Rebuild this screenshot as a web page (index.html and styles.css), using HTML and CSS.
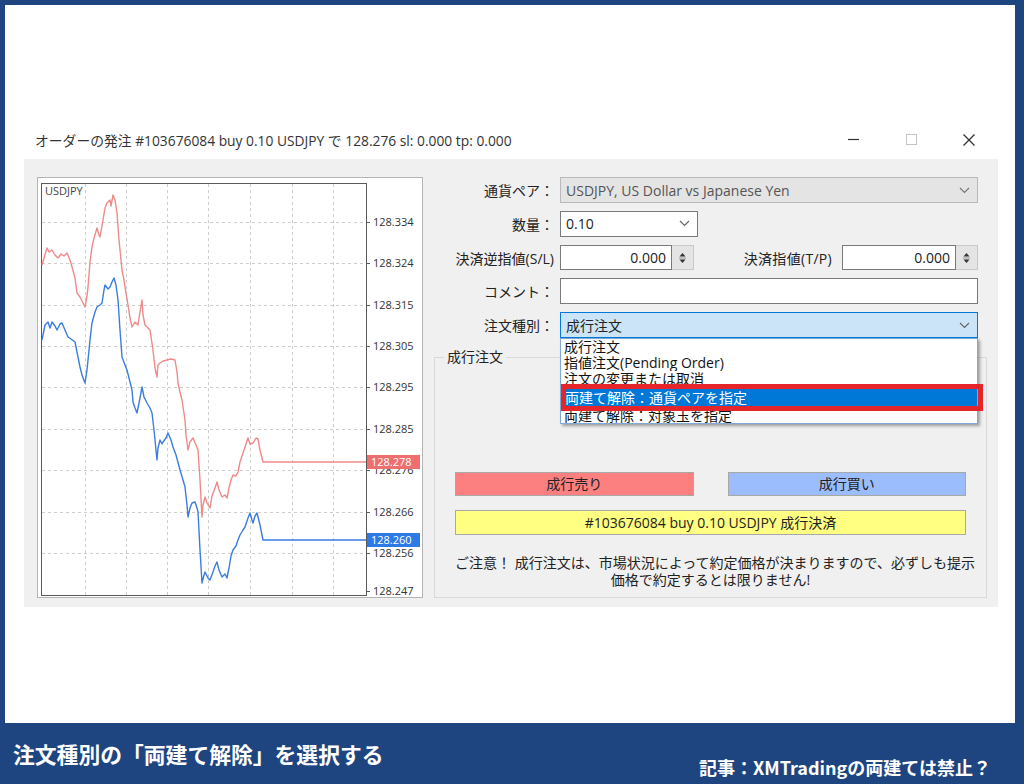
FILE: index.html
```html
<!DOCTYPE html>
<html lang="ja">
<head>
<meta charset="utf-8">
<title>オーダーの発注</title>
<link rel="stylesheet" href="styles.css">
</head>
<body>
<div class="frame">
  <div class="canvas">
    <div class="dialog">
      <div class="titlebar">
        <span class="title">オーダーの発注 #103676084 buy 0.10 USDJPY で 128.276 sl: 0.000 tp: 0.000</span>
        <div class="controls">
          <div class="ctl"><svg width="11" height="11" viewBox="0 0 11 11"><path d="M0 5.5 H11" stroke="#333" stroke-width="1.2"/></svg></div>
          <div class="ctl"><svg width="11" height="11" viewBox="0 0 11 11"><rect x="0.5" y="0.5" width="10" height="10" fill="none" stroke="#c4c4c4" stroke-width="1"/></svg></div>
          <div class="ctl"><svg width="12" height="12" viewBox="0 0 12 12"><path d="M0.5 0.5 L11.5 11.5 M11.5 0.5 L0.5 11.5" stroke="#333" stroke-width="1.3"/></svg></div>
        </div>
      </div>
      <div class="body">
        <div class="chart">
          <svg width="386" height="421" viewBox="37 177 386 421">
            <rect x="37.5" y="177.5" width="385" height="420" fill="#fff" stroke="#b4b4b4"/>
            <g stroke="#cdcdcd" stroke-width="1" stroke-dasharray="3 3">
              <line x1="42" y1="222.5" x2="366" y2="222.5"/>
              <line x1="42" y1="263.5" x2="366" y2="263.5"/>
              <line x1="42" y1="305.5" x2="366" y2="305.5"/>
              <line x1="42" y1="346.5" x2="366" y2="346.5"/>
              <line x1="42" y1="387.5" x2="366" y2="387.5"/>
              <line x1="42" y1="429.5" x2="366" y2="429.5"/>
              <line x1="42" y1="470.5" x2="366" y2="470.5"/>
              <line x1="42" y1="512.5" x2="366" y2="512.5"/>
              <line x1="42" y1="553.5" x2="366" y2="553.5"/>
              <line x1="85.5" y1="184" x2="85.5" y2="595"/>
              <line x1="126.5" y1="184" x2="126.5" y2="595"/>
              <line x1="167.5" y1="184" x2="167.5" y2="595"/>
              <line x1="208.5" y1="184" x2="208.5" y2="595"/>
              <line x1="250.5" y1="184" x2="250.5" y2="595"/>
              <line x1="292.5" y1="184" x2="292.5" y2="595"/>
              <line x1="333.5" y1="184" x2="333.5" y2="595"/>
            </g>
            <rect x="41.5" y="183.5" width="325" height="412" fill="none" stroke="#5a5a5a"/>
            <g stroke="#5a5a5a" stroke-width="1">
              <line x1="367" y1="222.5" x2="370" y2="222.5"/>
              <line x1="367" y1="263.5" x2="370" y2="263.5"/>
              <line x1="367" y1="305.5" x2="370" y2="305.5"/>
              <line x1="367" y1="346.5" x2="370" y2="346.5"/>
              <line x1="367" y1="387.5" x2="370" y2="387.5"/>
              <line x1="367" y1="429.5" x2="370" y2="429.5"/>
              <line x1="367" y1="470.5" x2="370" y2="470.5"/>
              <line x1="367" y1="512.5" x2="370" y2="512.5"/>
              <line x1="367" y1="553.5" x2="370" y2="553.5"/>
              <line x1="367" y1="591.5" x2="370" y2="591.5"/>
            </g>
            <g class="axis">
              <text x="373" y="226">128.334</text>
              <text x="373" y="267">128.324</text>
              <text x="373" y="309">128.315</text>
              <text x="373" y="350">128.305</text>
              <text x="373" y="391">128.295</text>
              <text x="373" y="433">128.285</text>
              <text x="373" y="474">128.276</text>
              <text x="373" y="516">128.266</text>
              <text x="373" y="557">128.256</text>
              <text x="373" y="595">128.247</text>
            </g>
            <text class="sym" x="45" y="195">USDJPY</text>
            <polyline fill="none" stroke="#ef8a8a" stroke-width="1.4" stroke-linejoin="round" points="42,265 44,258 47,248 49,252 52,250 55,255 58,258 61,254 64,256 67,253 70,260 72,267 75,278 77,293 80,297 83,303 85,307 87,296 88,287 90,262 92,247 94,238 97,228 99,235 100,237 103,220 105,208 107,203 110,200 111,206 113,195 115,200 117,213 119,240 122,270 124,280 125,287 128,305 130,318 132,327 135,322 138,325 140,312 142,300 143,315 145,325 148,328 150,330 153,350 155,368 157,377 158,365 160,363 163,361 167,360 171,359 175,360 177,372 178,383 180,392 182,400 185,420 186,435 188,450 190,442 193,438 196,445 198,450 200,480 202,517 203,505 205,497 207,503 210,508 212,496 215,488 217,482 219,490 222,497 225,495 227,498 229,488 231,480 233,475 236,476 238,472 240,462 243,453 245,447 248,438 250,444 253,443 256,438 258,439 260,450 263,462 366,462"/>
            <polyline fill="none" stroke="#3b7ce0" stroke-width="1.4" stroke-linejoin="round" points="42,340 44,330 45,325 48,322 50,328 52,322 55,326 57,330 60,324 62,323 65,330 68,337 71,339 75,342 77,352 80,367 82,375 85,383 87,370 88,360 90,340 92,323 95,312 97,307 100,305 102,303 104,290 105,285 108,289 110,287 112,282 114,278 116,285 118,300 120,330 122,357 125,365 127,370 130,382 132,390 133,402 135,408 137,413 140,398 142,387 144,397 147,403 150,408 152,413 154,430 157,460 158,448 160,440 162,444 163,442 166,438 168,433 171,440 173,447 176,455 180,470 183,480 185,487 187,505 188,517 190,508 192,503 195,502 197,508 198,512 200,550 202,583 204,575 205,572 208,578 210,580 213,572 215,566 217,562 219,570 222,577 225,574 227,578 229,568 231,556 233,550 236,546 238,540 240,535 243,530 245,527 248,518 250,513 252,520 253,523 255,516 257,513 260,525 263,540 366,540"/>
            <rect x="367" y="455" width="53" height="14" fill="#ef6f6f"/>
            <text class="badge" x="371" y="466">128.278</text>
            <rect x="367" y="533" width="53" height="14" fill="#2d7ae6"/>
            <text class="badge" x="371" y="544">128.260</text>
          </svg>
        </div>
        <div class="panel">
          <div class="form">
            <div class="row">
              <span class="lbl">通貨ペア：</span>
              <div class="combo disabled"><span>USDJPY, US Dollar vs Japanese Yen</span><svg width="11" height="7" viewBox="0 0 11 7"><path d="M1 1 L5.5 5.5 L10 1" fill="none" stroke="#777" stroke-width="1.2"/></svg></div>
            </div>
            <div class="row">
              <span class="lbl">数量：</span>
              <div class="combo select"><span>0.10</span><svg width="11" height="7" viewBox="0 0 11 7"><path d="M1 1 L5.5 5.5 L10 1" fill="none" stroke="#666" stroke-width="1.2"/></svg></div>
            </div>
            <div class="row">
              <span class="lbl">決済逆指値(S/L)</span>
              <div class="pair">
                <div class="spinbox sl"><div class="num">0.000</div><div class="spin"><svg width="9" height="16" viewBox="0 0 9 16"><path d="M4.5 3 L7.5 6.5 H1.5 Z M1.5 9.5 H7.5 L4.5 13 Z" fill="#333"/><path d="M1 8 H8" stroke="#999" stroke-width="1"/></svg></div></div>
                <span class="lbl2">決済指値(T/P)</span>
                <div class="spinbox tp"><div class="num">0.000</div><div class="spin"><svg width="9" height="16" viewBox="0 0 9 16"><path d="M4.5 3 L7.5 6.5 H1.5 Z M1.5 9.5 H7.5 L4.5 13 Z" fill="#333"/><path d="M1 8 H8" stroke="#999" stroke-width="1"/></svg></div></div>
              </div>
            </div>
            <div class="row">
              <span class="lbl">コメント：</span>
              <div class="text"></div>
            </div>
            <div class="row">
              <span class="lbl">注文種別：</span>
              <div class="combo focus"><span>成行注文</span><svg width="11" height="7" viewBox="0 0 11 7"><path d="M1 1 L5.5 5.5 L10 1" fill="none" stroke="#666" stroke-width="1.2"/></svg></div>
            </div>
          </div>
          <div class="group">
            <span class="group-label">成行注文</span>
            <div class="btn-row">
              <div class="btn sell">成行売り</div>
              <div class="btn buy">成行買い</div>
            </div>
            <div class="btn close">#103676084 buy 0.10 USDJPY 成行決済</div>
            <p class="note">ご注意！ 成行注文は、市場状況によって約定価格が決まりますので、必ずしも提示<br>価格で約定するとは限りません!</p>
          </div>
          <div class="dropdown">
            <div class="item i1">成行注文</div>
            <div class="item i2">指値注文(Pending Order)</div>
            <div class="item i3">注文の変更または取消</div>
            <div class="item sel">両建て解除：通貨ペアを指定</div>
            <div class="item i5">両建て解除：対象玉を指定</div>
          </div>
          <div class="mark"></div>
        </div>
      </div>
    </div>
  </div>
  <div class="banner">
    <span class="caption">注文種別の「両建て解除」を選択する</span>
    <span class="link">記事：XMTradingの両建ては禁止？</span>
  </div>
</div>
</body>
</html>
```

FILE: styles.css
```css
* { box-sizing: border-box; }
html, body { margin: 0; padding: 0; }
body {
  width: 1024px;
  height: 784px;
  overflow: hidden;
  background: #1f4580;
  font-family: "Open Sans", "Noto Sans CJK JP", sans-serif;
  color: #222;
}
.frame { width: 1024px; height: 784px; display: flex; flex-direction: column; }
.canvas {
  margin: 5px 9px 0 5px;
  height: 718px;
  background: #fff;
  padding: 115px 0 0 19px;
}
.dialog { width: 974px; }
.titlebar {
  height: 39px;
  display: flex;
  align-items: center;
  justify-content: space-between;
  padding-left: 11px;
}
.title { font-size: 13.8px; color: #333; white-space: nowrap; }
.controls { display: flex; }
.ctl { width: 58px; height: 39px; display: flex; align-items: center; justify-content: center; }
.body {
  height: 448px;
  background: #f0f0f0;
  display: flex;
  padding: 18px 0 0 13px;
}
.chart { width: 386px; height: 421px; flex: none; }
.chart svg { display: block; }
.axis text { font-family: "Open Sans", sans-serif; font-size: 11px; fill: #333; }
.sym { font-family: "Open Sans", sans-serif; font-size: 11px; fill: #444; }
.badge { font-family: "Open Sans", sans-serif; font-size: 11px; fill: #fff; }
.panel { position: relative; width: 557px; margin-left: 10px; }
.form { width: 545px; display: flex; flex-direction: column; gap: 7.75px; }
.row {
  display: grid;
  grid-template-columns: 121px 418px;
  column-gap: 6px;
  height: 26px;
  align-items: center;
}
.lbl { text-align: right; font-size: 14px; white-space: nowrap; color: #222; }
.combo {
  height: 26px;
  border: 1px solid #7a7a7a;
  background: #fff;
  display: flex;
  align-items: center;
  justify-content: space-between;
  padding: 0 7px 0 5px;
  font-size: 14px;
}
.combo.disabled { background: #e4e4e4; border-color: #b9b9b9; color: #555; }
.combo.select { width: 138px; }
.combo.focus { background: #cce4f7; border-color: #0078d7; }
.pair { display: flex; align-items: center; height: 26px; }
.spinbox { display: flex; height: 25px; }
.spinbox.sl { width: 134px; }
.spinbox.tp { width: 136px; }
.num {
  flex: 1;
  background: #fff;
  border: 1px solid #7a7a7a;
  text-align: right;
  padding-right: 5px;
  font-size: 14px;
  line-height: 23px;
}
.spin {
  width: 22px;
  background: #e4e4e4;
  border: 1px solid #c8c8c8;
  border-left: none;
  display: flex;
  align-items: center;
  justify-content: center;
}
.lbl2 { flex: 1; text-align: right; padding-right: 10px; font-size: 14px; white-space: nowrap; letter-spacing: 0.3px; }
.text { height: 26px; background: #fff; border: 1px solid #7a7a7a; }
.group {
  margin: 19px 0 0 1px;
  width: 553px;
  height: 241px;
  border: 1px solid #d9d9d9;
  padding: 0 20px 0 20px;
}
.group-label {
  display: inline-block;
  margin: -9px 0 0 -11px;
  padding: 0 3px;
  background: #f0f0f0;
  font-size: 14px;
  line-height: 16px;
  height: 16px;
  vertical-align: top;
}
.btn-row { display: flex; gap: 34px; margin-top: 92px; }
.btn {
  height: 24px;
  border: 1px solid #a8a8a8;
  font-size: 14px;
  line-height: 22px;
  text-align: center;
  color: #222;
}
.btn-row .btn { flex: 1; }
.sell { background: #fd8080; }
.buy { background: #9cbdfd; }
.close { margin-top: 14px; height: 25px; line-height: 23px; background: #ffff82; }
.note {
  margin: 19px 0 0;
  font-size: 14px;
  line-height: 17px;
  text-align: center;
  color: #222;
  white-space: nowrap;
}
.dropdown {
  position: absolute;
  left: 127px;
  top: 161px;
  width: 418px;
  height: 86px;
  background: #fff;
  border: 1px solid #7fa9d6;
  box-shadow: 2px 2px 3px rgba(0, 0, 0, 0.35);
  overflow: hidden;
}
.item {
  font-size: 14px;
  padding-left: 3px;
  white-space: nowrap;
  overflow: hidden;
  color: #111;
}
.i1, .i2 { height: 16px; line-height: 16px; }
.i3 { height: 18px; line-height: 16px; }
.sel { height: 17px; line-height: 17px; background: #0078d7; color: #fff; padding-left: 4px; }
.i5 { height: 17px; line-height: 20px; }
.mark {
  position: absolute;
  left: 128px;
  top: 207px;
  width: 422px;
  height: 27px;
  border: 5px solid #e4262b;
}
.banner {
  height: 61px;
  display: flex;
  justify-content: space-between;
  align-items: flex-start;
  color: #fff;
  font-family: "Noto Sans CJK JP", sans-serif;
  font-weight: bold;
}
.caption { font-size: 21.8px; line-height: 26px; margin: 18px 0 0 13px; }
.link { font-size: 18px; line-height: 22px; margin: 33px 33px 0 0; }
```
